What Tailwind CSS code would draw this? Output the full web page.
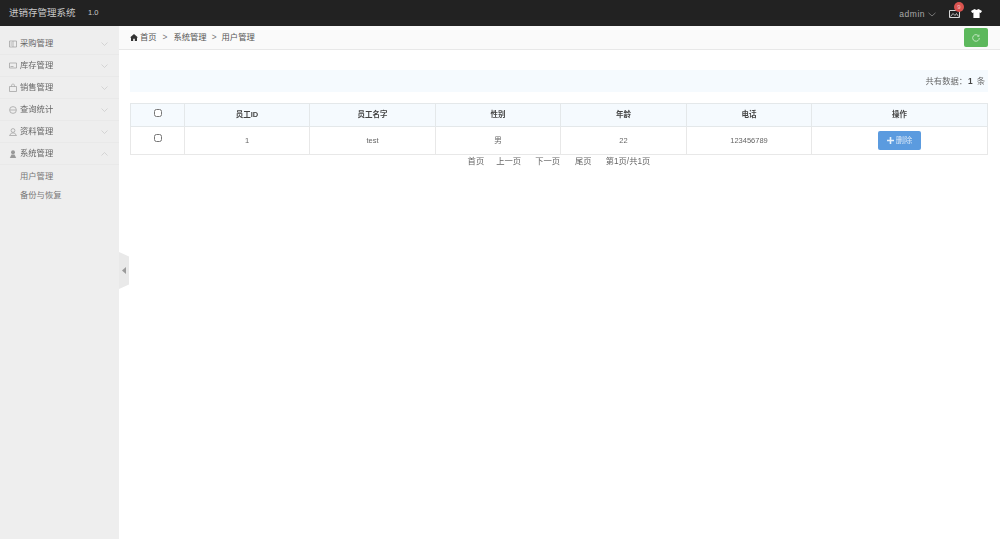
<!DOCTYPE html>
<html lang="zh-CN">
<head>
    <meta charset="UTF-8">
    <meta name="viewport" content="width=device-width, initial-scale=1.0">
    <title>进销存管理系统</title>
    <script src="https://cdn.jsdelivr.net/npm/@tailwindcss/browser@4"></script>
</head>
<body class="bg-white w-[1000px] h-[539px] overflow-hidden flex flex-col blur-[0.3px] font-['Liberation_Sans','Noto_Sans_CJK_SC',sans-serif] text-[8.3px] text-[#555]">

    <!-- Top bar -->
    <header class="h-[26px] shrink-0 bg-[#222222] flex items-center pl-[9px] text-[#c9c9c9]">
        <span class="text-[9.5px] w-[79px]">进销存管理系统</span>
        <span class="text-[7.5px]">1.0</span>
        <div class="ml-auto flex items-center h-full pt-[2px]">
            <span class="text-[8.5px] tracking-[0.5px] text-[#aaaaaa]">admin</span>
            <svg class="ml-[3px]" width="8" height="5" viewBox="0 0 8 5" fill="none" stroke="#8a8a8a" stroke-width="0.8"><path d="M0.5 0.8 4 4 7.5 0.8"/></svg>
            <div class="relative ml-[13px]">
                <svg class="block" width="11" height="8" viewBox="0 0 11 8" fill="none" stroke="#d8d8d8" stroke-width="1"><path d="M0.5 0.5h10v7h-10z"/><path d="M1.5 6.5 4 3.5l2 2 1.5-2 2 3" stroke-width="0.8"/></svg>
                <span class="absolute -top-[8px] left-[5px] w-[10px] h-[10px] rounded-full bg-[#d9534f] text-[#f5c0c0] text-[6px] leading-[10px] text-center">9</span>
            </div>
            <svg class="ml-[11px] mr-[18px] -mt-[2px]" width="11" height="9" viewBox="0 0 11 9" fill="#ffffff"><path d="M3.5 0 5.5 1 7.5 0 11 2 9.8 4 8.6 3.4V9H2.4V3.4L1.2 4 0 2z"/></svg>
        </div>
    </header>

    <div class="flex-1 flex min-h-0">
        <!-- Sidebar -->
        <aside class="relative w-[119px] shrink-0 bg-[#eeeeee] pt-[7px] text-[#666]">
            <nav>
                <a class="flex items-center h-[22px] pl-[9px] pr-[11px] border-b border-[#e9e9e9]">
                    <svg class="w-[8px] mr-[3px]" height="8" viewBox="0 0 8 8" fill="none" stroke="#a5a5a5" stroke-width="0.8"><path d="M0.5 1h7v6h-7zM4 1v6M1.5 3h1.5M1.5 5h1.5"/></svg>
                    <span>采购管理</span>
                    <svg class="ml-auto" width="7" height="4" viewBox="0 0 7 4" fill="none" stroke="#c8c8c8" stroke-width="0.7"><path d="M0.5 0.5 3.5 3.5 6.5 0.5"/></svg>
                </a>
                <a class="flex items-center h-[22px] pl-[9px] pr-[11px] border-b border-[#e9e9e9]">
                    <svg class="w-[8px] mr-[3px]" height="7" viewBox="0 0 8 7" fill="none" stroke="#a5a5a5" stroke-width="0.8"><path d="M0.5 1h7v5h-7zM1.5 4.5h3"/></svg>
                    <span>库存管理</span>
                    <svg class="ml-auto" width="7" height="4" viewBox="0 0 7 4" fill="none" stroke="#c8c8c8" stroke-width="0.7"><path d="M0.5 0.5 3.5 3.5 6.5 0.5"/></svg>
                </a>
                <a class="flex items-center h-[22px] pl-[9px] pr-[11px] border-b border-[#e9e9e9]">
                    <svg class="w-[8px] mr-[3px]" height="9" viewBox="0 0 8 9" fill="none" stroke="#a5a5a5" stroke-width="0.8"><path d="M0.5 3.5h7v5h-7zM2.5 3.5C2.5 0 5.5 0 5.5 3.5"/></svg>
                    <span>销售管理</span>
                    <svg class="ml-auto" width="7" height="4" viewBox="0 0 7 4" fill="none" stroke="#c8c8c8" stroke-width="0.7"><path d="M0.5 0.5 3.5 3.5 6.5 0.5"/></svg>
                </a>
                <a class="flex items-center h-[22px] pl-[9px] pr-[11px] border-b border-[#e9e9e9]">
                    <svg class="w-[8px] mr-[3px]" height="8" viewBox="0 0 8 8" fill="none" stroke="#a5a5a5" stroke-width="0.8"><circle cx="4" cy="4" r="3.4"/><path d="M1 4h6"/></svg>
                    <span>查询统计</span>
                    <svg class="ml-auto" width="7" height="4" viewBox="0 0 7 4" fill="none" stroke="#c8c8c8" stroke-width="0.7"><path d="M0.5 0.5 3.5 3.5 6.5 0.5"/></svg>
                </a>
                <a class="flex items-center h-[22px] pl-[9px] pr-[11px] border-b border-[#e9e9e9]">
                    <svg class="w-[8px] mr-[3px]" height="8" viewBox="0 0 8 8" fill="none" stroke="#a5a5a5" stroke-width="0.8"><circle cx="4" cy="2.5" r="1.9"/><path d="M0.5 7.5 2.5 5h3l2 2.5z"/></svg>
                    <span>资料管理</span>
                    <svg class="ml-auto" width="7" height="4" viewBox="0 0 7 4" fill="none" stroke="#c8c8c8" stroke-width="0.7"><path d="M0.5 0.5 3.5 3.5 6.5 0.5"/></svg>
                </a>
                <a class="flex items-center h-[22px] pl-[9px] pr-[11px] border-b border-[#e9e9e9]">
                    <svg class="w-[8px] mr-[3px]" height="8" viewBox="0 0 8 8" fill="#999999"><circle cx="4" cy="2.2" r="2"/><path d="M0.8 8 2.5 4.5h3L7.2 8z"/></svg>
                    <span>系统管理</span>
                    <svg class="ml-auto" width="7" height="4" viewBox="0 0 7 4" fill="none" stroke="#c8c8c8" stroke-width="0.7"><path d="M0.5 3.5 3.5 0.5 6.5 3.5"/></svg>
                </a>
                <div class="pl-[20px] pt-[2px] text-[#777]">
                    <div class="h-[19px] leading-[19px]">用户管理</div>
                    <div class="h-[19px] leading-[19px]">备份与恢复</div>
                </div>
            </nav>
            <!-- collapse handle -->
            <div class="absolute left-full top-[226px] w-[10px] h-[37px] bg-[#e9e9e9] [clip-path:polygon(0_0,100%_12%,100%_88%,0_100%)] flex items-center justify-center">
                <svg width="4" height="7" viewBox="0 0 4 7" fill="#9a9a9a"><path d="M4 0v7L0 3.5z"/></svg>
            </div>
        </aside>

        <!-- Main -->
        <main class="flex-1 min-w-0 flex flex-col">
            <div class="h-[24px] bg-[#fafafa] border-b border-[#e8e8e8] flex items-center pl-[11px] pr-[12px]">
                <svg width="8" height="7" viewBox="0 0 8 7" fill="#333333"><path d="M4 0 8 3.6H7V7H4.8V4.8H3.2V7H1V3.6H0z"/></svg>
                <span class="ml-[2px]">首页</span>
                <span class="ml-[6px] text-[#777]">&gt;</span>
                <span class="ml-[6px]">系统管理</span>
                <span class="ml-[5px] text-[#777]">&gt;</span>
                <span class="ml-[5px]">用户管理</span>
                <button class="ml-auto w-[24px] h-[19px] rounded-[2px] bg-[#5cb85c] flex items-center justify-center">
                    <svg width="8" height="8" viewBox="0 0 8 8" fill="none" stroke="#cdeccd" stroke-width="0.9"><path d="M6.8 2.2A3.3 3.3 0 1 0 7.3 4"/><path d="M7 0.6v1.8H5.2" stroke-width="0.7"/></svg>
                </button>
            </div>

            <div class="pl-[11px] pr-[12px] pt-[20px]">
                <div class="h-[22px] bg-[#f5fafe] flex items-center justify-end pr-[3px] text-[#666]">
                    共有数据：<b class="text-[#444] ml-[1px] mr-[4px]">1</b>条
                </div>

                <table class="w-[857px] mt-[11px] table-fixed border-collapse text-[7.5px] text-center">
                    <colgroup>
                        <col class="w-[54px]"><col class="w-[125px]"><col class="w-[126px]"><col class="w-[125px]"><col class="w-[126px]"><col class="w-[125px]"><col class="w-[176px]">
                    </colgroup>
                    <thead class="bg-[#f5fafe] text-[#444] font-bold">
                        <tr class="h-[23px]">
                            <th class="border border-[#e4e8ea] p-0"><input type="checkbox" class="block mx-auto w-[8px] h-[8px] -mt-[5px]"></th>
                            <th class="border border-[#e4e8ea] p-0">员工ID</th>
                            <th class="border border-[#e4e8ea] p-0">员工名字</th>
                            <th class="border border-[#e4e8ea] p-0">性别</th>
                            <th class="border border-[#e4e8ea] p-0">年龄</th>
                            <th class="border border-[#e4e8ea] p-0">电话</th>
                            <th class="border border-[#e4e8ea] p-0">操作</th>
                        </tr>
                    </thead>
                    <tbody class="text-[#666]">
                        <tr class="h-[28px]">
                            <td class="border border-[#e8e8e8] p-0"><input type="checkbox" class="block mx-auto w-[8px] h-[8px] -mt-[5px]"></td>
                            <td class="border border-[#e8e8e8] p-0">1</td>
                            <td class="border border-[#e8e8e8] p-0">test</td>
                            <td class="border border-[#e8e8e8] p-0">男</td>
                            <td class="border border-[#e8e8e8] p-0">22</td>
                            <td class="border border-[#e8e8e8] p-0">123456789</td>
                            <td class="border border-[#e8e8e8] p-0">
                                <button class="inline-flex items-center justify-center w-[43px] h-[19px] rounded-[2px] bg-[#5b9bdf] text-[#d6e6f7] text-[8.3px] align-middle">
                                    <svg class="mr-[2px]" width="7" height="7" viewBox="0 0 7 7" fill="#e6f0fa"><path d="M2.7 0h1.6v2.7H7v1.6H4.3V7H2.7V4.3H0V2.7h2.7z"/></svg>删除
                                </button>
                            </td>
                        </tr>
                    </tbody>
                </table>

                <div class="flex justify-center h-[13px] items-center text-[#666]">
                    <span>首页</span>
                    <span class="ml-[12px]">上一页</span>
                    <span class="ml-[14px]">下一页</span>
                    <span class="ml-[15px]">尾页</span>
                    <span class="ml-[14px]">第1页/共1页</span>
                </div>
            </div>
        </main>
    </div>
</body>
</html>
